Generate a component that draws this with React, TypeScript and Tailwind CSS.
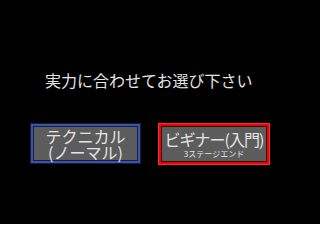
import React from "react"

const font = { fontFamily: '"Noto Sans CJK JP", "Noto Sans", sans-serif' }

function BlueButton() {
  return (
    <div className="bg-[#141c48] p-px w-[111px] h-[41px]">
      <div className="bg-[#3c54a4] p-[2px] h-full">
        <div className="bg-[#141c48] p-px h-full">
          <div className="bg-[#5c5c5c] h-full flex flex-col items-center justify-center text-[#e4e4e4] text-[16px] leading-[16px]">
            <span>テクニカル</span>
            <span>(ノーマル)</span>
          </div>
        </div>
      </div>
    </div>
  )
}

function RedButton() {
  return (
    <div className="bg-[#ff3030] p-px w-[112px] h-[42px]">
      <div className="bg-[#e00808] p-[2px] h-full">
        <div className="bg-[#3a0a0a] p-px h-full">
          <div className="bg-[#5c5c5c] h-full flex flex-col items-center justify-center text-[#e4e4e4]">
            <span className="text-[16px] leading-[18px] tracking-[-1px]">ビギナー(入門)</span>
            <span className="text-[8px] leading-[11px]">3ステージエンド</span>
          </div>
        </div>
      </div>
    </div>
  )
}

export default function App() {
  return (
    <div className="w-[320px] h-[224px] bg-black flex flex-col" style={font}>
      <div className="pt-[71px] pl-[45px] text-[16px] leading-[18px] text-[#e4e4e4]">
        実力に合わせてお選び下さい
      </div>
      <div className="mt-[34px] pl-[30px] flex gap-[17px] items-start">
        <BlueButton />
        <RedButton />
      </div>
    </div>
  )
}
